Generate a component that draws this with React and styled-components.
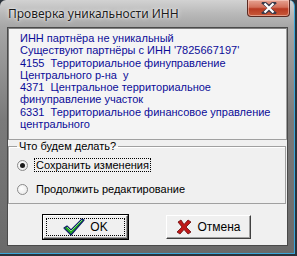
import styled, { createGlobalStyle } from "styled-components";

const GlobalStyle = createGlobalStyle`
  html, body {
    margin: 0;
    padding: 0;
    background: #2b323a;
    font-family: "Liberation Sans", Arial, sans-serif;
  }
`;

const Window = styled.div`
  width: 295px;
  height: 254px;
  box-sizing: border-box;
  border-radius: 6px 6px 0 0;
  border-right: 1px solid #3aa6d8;
  border-bottom: 1px solid #3aa6d8;
  background: linear-gradient(
    180deg,
    #d2d2d2 0px,
    #b8b8b8 14px,
    #a6a6a6 27px,
    #7a7a7a 120px,
    #6a6a6a 254px
  );
  display: flex;
  flex-direction: column;
  position: relative;
`;

const TitleBar = styled.div`
  height: 27px;
  display: flex;
  align-items: flex-start;
  padding-left: 8px;
`;

const Title = styled.div`
  font-family: "Noto Sans", "Liberation Sans", sans-serif;
  font-size: 12px;
  color: #1c1c1c;
  margin-top: 7px;
  line-height: 14px;
  text-shadow: 0 0 5px rgba(255, 255, 255, 0.9), 0 0 2px rgba(255, 255, 255, 0.9);
`;

const CloseButton = styled.div`
  position: absolute;
  top: 0;
  left: 247px;
  width: 43px;
  height: 17px;
  box-sizing: border-box;
  border: 1px solid #5a2a22;
  border-top: none;
  border-radius: 0 0 4px 4px;
  background: linear-gradient(180deg, #e6a392 0%, #d3705a 45%, #b83a22 55%, #c85a3a 100%);
  box-shadow: inset 0 0 0 1px rgba(255, 220, 210, 0.5);
  display: flex;
  align-items: center;
  justify-content: center;
`;

const Client = styled.div`
  margin-left: 7px;
  width: 281px;
  height: 219px;
  box-sizing: border-box;
  background: #f0f0f0;
  border: 1px solid #4a4a4a;
  display: flex;
  flex-direction: column;
`;

const Memo = styled.div`
  height: 112px;
  box-sizing: border-box;
  border: 1px solid #a0a0a0;
  border-top-color: #828282;
  border-left-color: #828282;
  background: #f4f4f4;
  padding: 3px 0 0 11px;
  color: #0c0c98;
  font-size: 11px;
  line-height: 12.3px;
`;

const MemoLine = styled.div`
  white-space: pre;
`;

const Group = styled.fieldset`
  margin: 0 1px 0 0;
  padding: 0 0 2px 0;
  border: 1px solid #a0a0a0;
  box-shadow: inset 1px 1px 0 #ffffff;
  font-size: 11px;
  color: #000;
`;

const Legend = styled.legend`
  margin-left: 8px;
  padding: 0 2px;
  line-height: 13px;
`;

const RadioRow = styled.div`
  height: 24px;
  display: flex;
  align-items: center;
  padding-left: 8px;
`;

const RadioCircle = styled.span`
  width: 11px;
  height: 11px;
  border-radius: 50%;
  box-sizing: border-box;
  border: 1px solid #8a8a8a;
  background: radial-gradient(circle at 40% 40%, #ffffff 0%, #e4e4e4 100%);
  display: flex;
  align-items: center;
  justify-content: center;
  margin-right: 7px;

  &::after {
    content: "";
    width: 5px;
    height: 5px;
    border-radius: 50%;
    background: ${(p) => (p.$checked ? "#1a1a1a" : "transparent")};
  }
`;

const RadioLabel = styled.span`
  padding: 0 1px;
  line-height: 12px;
  outline: ${(p) => (p.$focused ? "1px dotted #000" : "none")};
  outline-offset: 0;
`;

const ButtonRow = styled.div`
  display: flex;
  margin-top: 11px;
  padding-left: 35px;
  gap: 38px;
`;

const Button = styled.div`
  width: 85px;
  height: 24px;
  box-sizing: border-box;
  background: #f0f0f0;
  border: 1px solid;
  border-color: #ffffff #404040 #404040 #ffffff;
  box-shadow: ${(p) =>
    p.$default
      ? "0 0 0 1px #000, inset -1px -1px 0 #a0a0a0"
      : "inset -1px -1px 0 #a0a0a0"};
  display: flex;
  align-items: center;
  justify-content: center;
  gap: 5px;
  font-size: 12px;
  color: #000;
  position: relative;
`;

const Focus = styled.div`
  position: absolute;
  inset: 2px;
  border: 1px dotted #000;
`;

const MEMO = [
  "ИНН партнёра не уникальный",
  "Существуют партнёры с ИНН '7825667197'",
  "4155  Территориальное финуправление",
  "Центрального р-на  у",
  "4371  Центральное территориальное",
  "финуправление участок",
  "6331  Территориальное финансовое управление",
  "центрального",
];

export default function App() {
  return (
    <>
      <GlobalStyle />
      <Window>
        <TitleBar>
          <Title>Проверка уникальности ИНН</Title>
        </TitleBar>
        <CloseButton>
          <svg width="16" height="12" viewBox="0 0 16 12">
            <path
              d="M3 1 L8 5 L13 1 M3 11 L8 7 L13 11 M8 5 L8 7"
              stroke="#3a3a4a"
              strokeWidth="4"
              strokeLinecap="square"
              fill="none"
            />
            <path
              d="M3.5 1.5 L12.5 10.5 M12.5 1.5 L3.5 10.5"
              stroke="#ffffff"
              strokeWidth="2.2"
              fill="none"
            />
          </svg>
        </CloseButton>
        <Client>
          <Memo>
            {MEMO.map((line, i) => (
              <MemoLine key={i}>{line}</MemoLine>
            ))}
          </Memo>
          <Group>
            <Legend>Что будем делать?</Legend>
            <RadioRow>
              <RadioCircle $checked />
              <RadioLabel $focused>Сохранить изменения</RadioLabel>
            </RadioRow>
            <RadioRow>
              <RadioCircle />
              <RadioLabel>Продолжить редактирование</RadioLabel>
            </RadioRow>
          </Group>
          <ButtonRow>
            <Button $default>
              <Focus />
              <svg width="22" height="18" viewBox="0 0 22 18">
                <path
                  d="M1 10 L4 8 L8 12 L19 1 L21 2 L8 17 Z"
                  fill="#1fa31f"
                  stroke="#10206a"
                  strokeWidth="1.2"
                  strokeLinejoin="round"
                />
                <path d="M4 9 L8 13 L19 2" stroke="#7fe07f" strokeWidth="1" fill="none" />
              </svg>
              <span>OK</span>
            </Button>
            <Button>
              <svg width="16" height="16" viewBox="0 0 16 16">
                <path
                  d="M2 3 L5 1 L8 5.5 L12 1 L15 3 L10 8 L15 13 L12 15 L8 10.5 L4 15 L1 13 L6 8 Z"
                  fill="#c01818"
                  stroke="#6a0a0a"
                  strokeWidth="0.8"
                  strokeLinejoin="round"
                />
              </svg>
              <span>Отмена</span>
            </Button>
          </ButtonRow>
        </Client>
      </Window>
    </>
  );
}
